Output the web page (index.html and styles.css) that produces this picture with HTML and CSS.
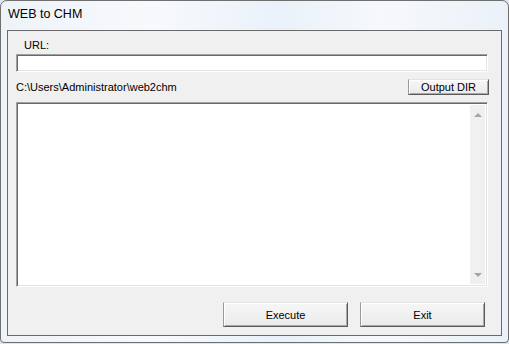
FILE: index.html
```html
<!DOCTYPE html>
<html lang="en">
<head>
    <meta charset="UTF-8">
    <meta name="viewport" content="width=device-width, initial-scale=1.0">
    <title>WEB to CHM</title>
    <link rel="stylesheet" href="styles.css">
</head>
<body>
    <div class="window">
        <header class="titlebar">WEB to CHM</header>
        <section class="client">
            <label class="url-label" for="url">URL:</label>
            <input class="edit url-input" id="url" type="text">
            <div class="dir-row">
                <span class="dir-path">C:\Users\Administrator\web2chm</span>
                <button class="btn btn-dir">Output DIR</button>
            </div>
            <!--log output con scrollbar deshabilitado-->
            <div class="edit log">
                <div class="log-text"></div>
                <div class="scrollbar">
                    <span class="arrow arrow-up"></span>
                    <span class="arrow arrow-down"></span>
                </div>
            </div>
            <div class="actions">
                <button class="btn btn-action">Execute</button>
                <button class="btn btn-action">Exit</button>
            </div>
        </section>
    </div>
</body>
</html>
```

FILE: styles.css
```css
html{
    box-sizing: border-box;
    font-family: "Liberation Sans", Arial, sans-serif;
    font-size: 11px;
}
*,
*::before,
*::after{
    box-sizing: inherit;
}
body{
    margin: 0;
    width: 509px;
    height: 344px;
    background: #dfe6ee;
}
.window{
    width: 509px;
    height: 343px;
    display: flex;
    flex-direction: column;
    border: 1px solid #6f6f6f;
    border-radius: 7px 7px 4px 4px;
    background: linear-gradient(90deg, #eef3f8 0%, #f7fafd 30%, #e9f1f9 55%, #f6f9fc 75%, #eaf1f8 100%);
}
.titlebar{
    height: 29px;
    padding: 6px 0 0 7px;
    font-size: 12.5px;
    color: #000;
}
.client{
    flex-grow: 1;
    margin: 0 6px 6px 6px;
    padding: 0 13px 0 8px;
    display: flex;
    flex-direction: column;
    background: #f0f0f0;
    border: 1px solid #6a6a6a;
}
.url-label{
    margin: 7px 0 0 8px;
    line-height: 14px;
    color: #000;
}
.edit{
    border: 1px solid;
    border-color: #a0a0a0 #ffffff #ffffff #a0a0a0;
    box-shadow: inset 1px 1px #696969, inset -1px -1px #e3e3e3;
    background: #fff;
}
.url-input{
    margin: 2px 0 0 0;
    height: 18px;
    padding: 0 3px;
    font: inherit;
    outline: none;
}
.dir-row{
    margin-top: 7px;
    display: flex;
    justify-content: space-between;
    align-items: center;
}
.dir-path{
    color: #000;
}
.btn{
    font: inherit;
    color: #000;
    padding: 0;
    border: 1px solid;
    border-color: #e3e3e3 #5a5a5a #5a5a5a #9a9a9a;
    box-shadow: inset 1px 1px #ffffff, inset -1px -1px #a8a8a8;
    background: linear-gradient(#f6f6f6, #ebebeb);
}
.btn-dir{
    width: 81px;
    height: 16px;
    margin-right: -1px;
}
.log{
    margin-top: 7px;
    height: 185px;
    display: flex;
    padding: 2px;
}
.log-text{
    flex-grow: 1;
}
.scrollbar{
    width: 15px;
    display: flex;
    flex-direction: column;
    justify-content: space-between;
    align-items: center;
    padding: 8px 0 7px;
    background: #f0f0f0;
}
.arrow{
    width: 0;
    height: 0;
    border-left: 4px solid transparent;
    border-right: 4px solid transparent;
}
.arrow-up{
    border-bottom: 4px solid #a6a6a6;
}
.arrow-down{
    border-top: 4px solid #a6a6a6;
}
.actions{
    margin-top: 15px;
    display: flex;
    justify-content: flex-end;
    gap: 12px;
    padding-right: 3px;
}
.btn-action{
    width: 125px;
    height: 25px;
}
```
